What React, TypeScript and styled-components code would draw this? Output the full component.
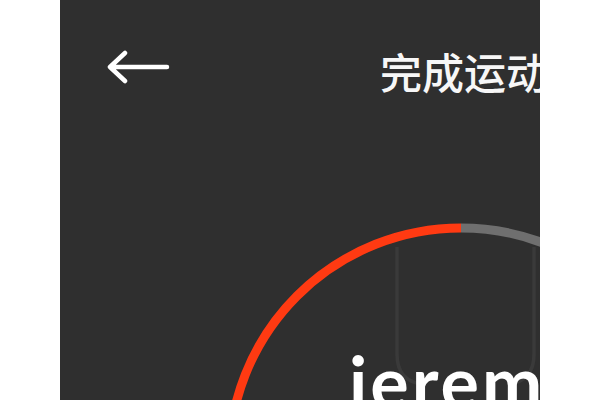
import styled, { createGlobalStyle } from 'styled-components'

const GlobalStyle = createGlobalStyle`
  html, body {
    margin: 0;
    padding: 0;
    background: #ffffff;
  }
`

const RING = { cx: 401, cy: 326, r: 232 }

const BackArrow = () => (
  <svg width="64" height="34" viewBox="0 0 64 34" fill="none">
    <path
      d="M4 17H61M19 3L4 17L19 31"
      stroke="#ffffff"
      strokeWidth="4.5"
      strokeLinecap="round"
      strokeLinejoin="round"
    />
  </svg>
)

const ProgressRing = () => {
  const { cx, cy, r } = RING
  return (
    <RingArt width="480" height="266" viewBox="0 0 480 266">
      <path
        d="M337 113V220C337 238 346 248 362 250M474 113V220C474 238 465 248 449 250"
        stroke="#3a3a3a"
        strokeWidth="3.5"
        fill="none"
      />
      <path
        d={`M${cx - r} ${cy} A${r} ${r} 0 0 1 ${cx} ${cy - r}`}
        stroke="#ff3a12"
        strokeWidth="9"
        fill="none"
      />
      <path
        d={`M${cx} ${cy - r} A${r} ${r} 0 0 1 ${cx + r} ${cy}`}
        stroke="#6f6f6f"
        strokeWidth="9"
        fill="none"
      />
    </RingArt>
  )
}

export default function App() {
  return (
    <>
      <GlobalStyle />
      <Page>
        <Screen>
          <Header>
            <BackButton aria-label="返回">
              <BackArrow />
            </BackButton>
            <Title>完成运动</Title>
          </Header>
          <RingSection>
            <ProgressRing />
            <UserName>jeremy</UserName>
          </RingSection>
        </Screen>
      </Page>
    </>
  )
}

const Page = styled.div`
  display: flex;
  justify-content: center;
  width: 600px;
  height: 400px;
`

const Screen = styled.main`
  display: flex;
  flex-direction: column;
  width: 480px;
  height: 400px;
  overflow: hidden;
  background: #2f2f2f;
`

const Header = styled.header`
  display: flex;
  align-items: center;
  flex: none;
  height: 134px;
  padding-left: 46px;
`

const BackButton = styled.button`
  display: flex;
  padding: 0;
  border: 0;
  background: none;
  cursor: pointer;
`

const Title = styled.h1`
  margin: 6px 0 0 210px;
  white-space: nowrap;
  color: #f7f7f7;
  font-family: 'Noto Sans CJK SC', 'Noto Sans', sans-serif;
  font-size: 42px;
  font-weight: 500;
  letter-spacing: 0;
`

const RingSection = styled.section`
  position: relative;
  flex: 1;
  padding: 211px 0 0 289px;
`

const RingArt = styled.svg`
  position: absolute;
  top: 0;
  left: 0;
`

const UserName = styled.div`
  position: relative;
  white-space: nowrap;
  color: #ffffff;
  font-family: Lato, 'Open Sans', sans-serif;
  font-size: 72px;
  font-weight: 700;
  line-height: 72px;
  letter-spacing: 3px;
`
